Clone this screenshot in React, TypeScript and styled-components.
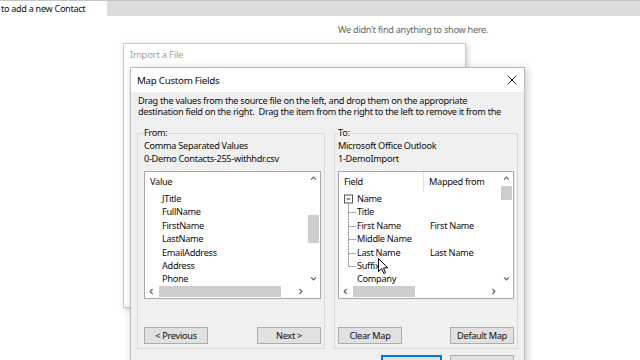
import styled, { createGlobalStyle } from "styled-components";

const GlobalStyle = createGlobalStyle`
  body {
    margin: 0;
    background: #fff;
    font-family: "Noto Sans", "Liberation Sans", sans-serif;
    letter-spacing: -0.3px;
    color: #0d0d0d;
  }
`;

const Page = styled.div`
  position: relative;
  width: 640px;
  height: 360px;
  overflow: hidden;
  background: #fff;
`;

const TopBar = styled.div`
  display: flex;
  height: 15px;
  border-top: 1px solid #c6c6c6;
  background: #dcdcdc;
`;

const SearchCell = styled.div`
  width: 106px;
  background: #fff;
  font-size: 9.1px;
  line-height: 15px;
  padding-left: 1px;
  white-space: nowrap;
  overflow: hidden;
`;

const EmptyNote = styled.p`
  margin: 7px 0 0 338px;
  font-size: 9.2px;
  line-height: 13px;
  color: #666;
`;

const ImportWindow = styled.div`
  position: absolute;
  left: 123px;
  top: 43px;
  width: 343px;
  height: 265px;
  box-sizing: border-box;
  border: 1px solid #c8c8c8;
  background: #fff;
  box-shadow: 2px 2px 6px rgba(0, 0, 0, 0.18);
`;

const ImportTitle = styled.div`
  padding: 5px 6px;
  font-size: 9.6px;
  line-height: 12px;
  color: #a3a3a3;
`;

const Dialog = styled.div`
  position: absolute;
  left: 130px;
  top: 67px;
  width: 395px;
  height: 310px;
  box-sizing: border-box;
  border: 1px solid #bdbdbd;
  background: #f0f0f0;
  box-shadow: 2px 2px 8px rgba(0, 0, 0, 0.22);
`;

const TitleBar = styled.div`
  display: flex;
  align-items: center;
  justify-content: space-between;
  height: 24px;
  padding: 0 7px 0 6px;
  background: #fff;
  font-size: 9.8px;
`;

const Body = styled.div`
  padding: 3px 6px 0 6px;
`;

const Description = styled.div`
  padding-left: 1px;
  font-size: 9.2px;
  line-height: 11px;
  height: 11px;
  white-space: nowrap;
`;

const Groups = styled.div`
  display: grid;
  grid-template-columns: 188px 184px;
  column-gap: 9px;
  margin-top: 10px;
`;

const Group = styled.fieldset<{ $padLeft: number }>`
  margin: 0;
  min-width: 0;
  padding: 0 3px 4px ${p => p.$padLeft}px;
  border: 1px solid #dadada;
`;

const Legend = styled.legend`
  padding: 0;
  font-size: 9.2px;
  line-height: 12px;
`;

const SourceLine = styled.div`
  font-size: 9.2px;
  line-height: 13px;
  white-space: nowrap;
`;

const ListBox = styled.div`
  display: grid;
  grid-template-columns: 1fr 13px;
  grid-template-rows: 1fr 13px;
  height: 128px;
  margin-top: 6px;
  box-sizing: border-box;
  border: 1px solid #a8a8a8;
  background: #fff;
`;

const ListContent = styled.div`
  overflow: hidden;
  font-size: 9.2px;
`;

const HeaderRow = styled.div<{ $cols: string }>`
  display: grid;
  grid-template-columns: ${p => p.$cols};
  height: 20px;
  line-height: 20px;
`;

const HeaderCell = styled.div<{ $divider?: boolean }>`
  padding-left: 5px;
  border-right: ${p => (p.$divider ? "1px solid #e4e4e4" : "none")};
`;

const Item = styled.div`
  padding-left: 17px;
  line-height: 13.4px;
  white-space: nowrap;
`;

const TreeRow = styled.div`
  display: grid;
  grid-template-columns: 18px 73px 1fr;
  height: 13.4px;
  line-height: 13.4px;
  white-space: nowrap;
`;

const VScroll = styled.div`
  display: flex;
  flex-direction: column;
  background: #fff;
`;

const HScroll = styled.div`
  display: flex;
  background: #fff;
`;

const Arrow = styled.div`
  flex: 0 0 13px;
  height: 13px;
  display: flex;
  align-items: center;
  justify-content: center;
`;

const Track = styled.div<{ $vertical?: boolean }>`
  flex: 1;
  display: flex;
  flex-direction: ${p => (p.$vertical ? "column" : "row")};
`;

const Thumb = styled.div<{ $vertical?: boolean }>`
  background: #cdcdcd;
  margin: ${p => (p.$vertical ? "0 1px" : "1px 0")};
`;

const Corner = styled.div`
  background: #fff;
`;

const ButtonRow = styled.div`
  display: flex;
  justify-content: space-between;
  margin-top: 28px;
`;

const Button = styled.button<{ $primary?: boolean }>`
  width: ${p => (p.$primary ? "61px" : "64px")};
  height: 17px;
  padding: 0;
  box-sizing: border-box;
  border: 1px solid ${p => (p.$primary ? "#0078d7" : "#adadad")};
  box-shadow: ${p => (p.$primary ? "inset 0 0 0 1px #0078d7" : "none")};
  background: #e1e1e1;
  font-family: inherit;
  font-size: 9.2px;
  letter-spacing: -0.3px;
  color: #0d0d0d;
`;

const Footer = styled.div`
  display: flex;
  justify-content: flex-end;
  gap: 8px;
  margin-top: 6px;
  padding-right: 4px;
`;

const Cursor = styled.svg`
  position: absolute;
  left: 378px;
  top: 258px;
`;

function Chevron({ dir }: { dir: "up" | "down" | "left" | "right" }) {
  const rot = { up: 0, right: 90, down: 180, left: 270 }[dir];
  return (
    <svg width="7" height="7" viewBox="0 0 7 7">
      <path
        d="M1 4.6 L3.5 2.1 L6 4.6"
        fill="none"
        stroke="#606060"
        strokeWidth="1.1"
        transform={`rotate(${rot} 3.5 3.5)`}
      />
    </svg>
  );
}

function Scrollbars({
  vTop,
  vSize,
  hLeft,
  hSize,
}: {
  vTop: number;
  vSize: number;
  hLeft: number;
  hSize: number;
}) {
  return (
    <>
      <VScroll>
        <Arrow>
          <Chevron dir="up" />
        </Arrow>
        <Track $vertical>
          <Thumb $vertical style={{ marginTop: vTop, height: vSize }} />
        </Track>
        <Arrow>
          <Chevron dir="down" />
        </Arrow>
      </VScroll>
      <HScroll>
        <Arrow>
          <Chevron dir="left" />
        </Arrow>
        <Track>
          <Thumb style={{ marginLeft: hLeft, width: hSize }} />
        </Track>
        <Arrow>
          <Chevron dir="right" />
        </Arrow>
      </HScroll>
      <Corner />
    </>
  );
}

type Branch = "root" | "child" | "last" | "none";

function TreeGutter({ branch }: { branch: Branch }) {
  const line = { stroke: "#7a7a7a", strokeWidth: 1, strokeDasharray: "1 0.6" };
  return (
    <svg width="18" height="13.4" viewBox="0 0 18 13.4">
      {branch === "root" && (
        <>
          <rect x="5.5" y="3" width="8" height="8" fill="#fff" stroke="#555" />
          <path d="M7.5 7 H11.5" stroke="#333" />
          <path d="M9.5 11 V13.4" {...line} />
        </>
      )}
      {branch === "child" && <path d="M9.5 0 V13.4 M9.5 7.5 H17" {...line} />}
      {branch === "last" && <path d="M9.5 0 V7.5 H17" {...line} fill="none" />}
    </svg>
  );
}

const sourceFields = ["JTitle", "FullName", "FirstName", "LastName", "EmailAddress", "Address", "Phone"];

const targetFields: { name: string; mapped: string; branch: Branch }[] = [
  { name: "Name", mapped: "", branch: "root" },
  { name: "Title", mapped: "", branch: "child" },
  { name: "First Name", mapped: "First Name", branch: "child" },
  { name: "Middle Name", mapped: "", branch: "child" },
  { name: "Last Name", mapped: "Last Name", branch: "child" },
  { name: "Suffix", mapped: "", branch: "last" },
  { name: "Company", mapped: "", branch: "none" },
];

export default function App() {
  return (
    <Page>
      <GlobalStyle />
      <TopBar>
        <SearchCell>to add a new Contact</SearchCell>
      </TopBar>
      <EmptyNote>We didn't find anything to show here.</EmptyNote>

      <ImportWindow>
        <ImportTitle>Import a File</ImportTitle>
      </ImportWindow>

      <Dialog>
        <TitleBar>
          <span>Map Custom Fields</span>
          <svg width="10" height="10" viewBox="0 0 10 10">
            <path d="M0.5 0.5 L9.5 9.5 M9.5 0.5 L0.5 9.5" stroke="#222" strokeWidth="1" />
          </svg>
        </TitleBar>
        <Body>
          <Description>
            Drag the values from the source file on the left, and drop them on the appropriate
          </Description>
          <Description>
            destination field on the right.&nbsp; Drag the item from the right to the left to remove it from the
          </Description>
          <Groups>
            <Group $padLeft={6}>
              <Legend>From:</Legend>
              <SourceLine>Comma Separated Values</SourceLine>
              <SourceLine>0-Demo Contacts-255-withhdr.csv</SourceLine>
              <ListBox>
                <ListContent>
                  <HeaderRow $cols="1fr">
                    <HeaderCell>Value</HeaderCell>
                  </HeaderRow>
                  {sourceFields.map(f => (
                    <Item key={f}>{f}</Item>
                  ))}
                </ListContent>
                <Scrollbars vTop={30} vSize={28} hLeft={1} hSize={122} />
              </ListBox>
              <ButtonRow>
                <Button>&lt; Previous</Button>
                <Button>Next &gt;</Button>
              </ButtonRow>
            </Group>
            <Group $padLeft={3}>
              <Legend>To:</Legend>
              <SourceLine>Microsoft Office Outlook</SourceLine>
              <SourceLine>1-DemoImport</SourceLine>
              <ListBox>
                <ListContent>
                  <HeaderRow $cols="85px 1fr">
                    <HeaderCell $divider>Field</HeaderCell>
                    <HeaderCell>Mapped from</HeaderCell>
                  </HeaderRow>
                  {targetFields.map(f => (
                    <TreeRow key={f.name}>
                      <TreeGutter branch={f.branch} />
                      <span>{f.name}</span>
                      <span>{f.mapped}</span>
                    </TreeRow>
                  ))}
                </ListContent>
                <Scrollbars vTop={1} vSize={14} hLeft={1} hSize={62} />
              </ListBox>
              <ButtonRow>
                <Button>Clear Map</Button>
                <Button>Default Map</Button>
              </ButtonRow>
            </Group>
          </Groups>
          <Footer>
            <Button $primary>OK</Button>
            <Button>Cancel</Button>
          </Footer>
        </Body>
      </Dialog>

      <Cursor width="11" height="17" viewBox="0 0 11 17">
        <path
          d="M0.5 0.5 V13.5 L3.6 10.6 L5.8 15.6 L7.6 14.8 L5.5 9.9 H9.8 Z"
          fill="#fff"
          stroke="#000"
          strokeWidth="1"
          strokeLinejoin="round"
        />
      </Cursor>
    </Page>
  );
}
